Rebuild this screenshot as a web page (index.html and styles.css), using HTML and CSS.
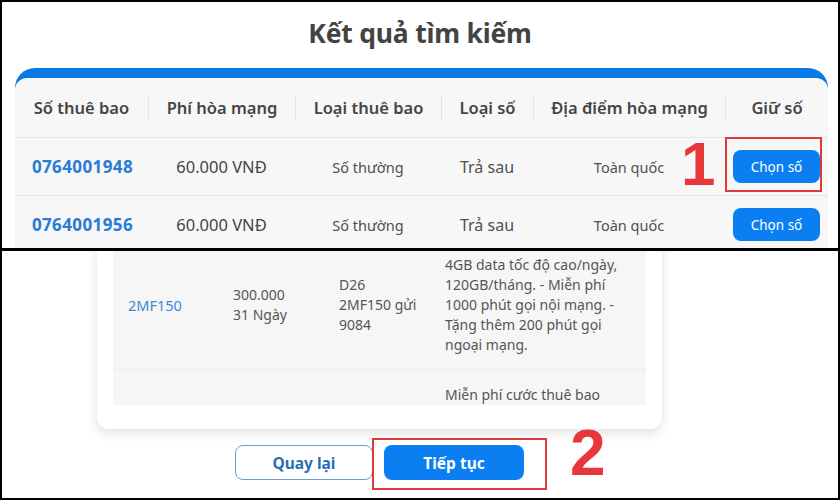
FILE: index.html
```html
<!DOCTYPE html>
<html lang="vi">
<head>
<meta charset="utf-8">
<title>Kết quả tìm kiếm</title>
<link rel="stylesheet" href="styles.css">
</head>
<body>
<div class="shot">
  <section class="panel panel-top">
    <h1 class="title">Kết quả tìm kiếm</h1>
    <div class="result-card">
      <div class="result-table">
        <div class="row head">
          <div class="cell"><span>Số thuê bao</span></div>
          <div class="cell sep"><span>Phí hòa mạng</span></div>
          <div class="cell sep"><span>Loại thuê bao</span></div>
          <div class="cell sep"><span>Loại số</span></div>
          <div class="cell sep"><span>Địa điểm hòa mạng</span></div>
          <div class="cell sep"><span>Giữ số</span></div>
        </div>
        <div class="row body-row">
          <div class="cell phone">0764001948</div>
          <div class="cell fee">60.000 VNĐ</div>
          <div class="cell small">Số thường</div>
          <div class="cell mid">Trả sau</div>
          <div class="cell small">Toàn quốc</div>
          <div class="cell"><button class="pick">Chọn số</button></div>
        </div>
        <div class="row body-row">
          <div class="cell phone">0764001956</div>
          <div class="cell fee">60.000 VNĐ</div>
          <div class="cell small">Số thường</div>
          <div class="cell mid">Trả sau</div>
          <div class="cell small">Toàn quốc</div>
          <div class="cell"><button class="pick">Chọn số</button></div>
        </div>
      </div>
    </div>
    <div class="mark mark-box-1"></div>
    <div class="mark mark-num mark-num-1">1</div>
  </section>

  <section class="panel panel-bottom">
    <div class="pack-card">
      <div class="pack-table">
        <div class="pack-row first">
          <div class="pcell code">2MF150</div>
          <div class="pcell">300.000<br>31 Ngày</div>
          <div class="pcell">D26<br>2MF150 gửi<br>9084</div>
          <div class="pcell desc">4GB data tốc độ cao/ngày,<br>120GB/tháng. - Miễn phí<br>1000 phút gọi nội mạng. -<br>Tặng thêm 200 phút gọi<br>ngoại mạng.</div>
        </div>
        <div class="pack-row second">
          <div class="pcell"></div>
          <div class="pcell"></div>
          <div class="pcell"></div>
          <div class="pcell desc">Miễn phí cước thuê bao</div>
        </div>
      </div>
    </div>
    <div class="actions">
      <button class="btn back">Quay lại</button>
      <button class="btn next">Tiếp tục</button>
    </div>
    <div class="mark mark-box-2"></div>
    <div class="mark mark-num mark-num-2">2</div>
  </section>
</div>
</body>
</html>
```

FILE: styles.css
```css
* { box-sizing: border-box; }
html, body { margin: 0; padding: 0; background: #fff; }
body { font-family: "Noto Sans", "Open Sans", sans-serif; color: #444; }

.shot { width: 840px; height: 500px; display: flex; flex-direction: column; }

.panel {
  position: relative;
  overflow: hidden;
  background: #fff;
  border-left: 2px solid #000;
  border-right: 2px solid #000;
}
.panel-top { height: 251px; border-top: 2px solid #000; border-bottom: 3px solid #000; }
.panel-bottom { height: 249px; border-bottom: 2px solid #000; background: #fff; }

.title {
  margin: 0;
  padding-top: 13px;
  height: 66px;
  text-align: center;
  font-size: 26.5px;
  font-weight: 700;
  line-height: 36px;
  color: #434343;
  letter-spacing: -0.2px;
}

.result-card {
  margin-left: 13px;
  width: 813px;
  background: #0b79e3;
  border-radius: 20px 20px 0 0;
  padding-top: 10px;
}
.result-table {
  background: #f7f7f7;
  border-radius: 12px 12px 0 0;
}
.row {
  display: grid;
  grid-template-columns: 133px 147px 146px 92px 192px 103px;
  align-items: center;
}
.row.head { height: 59px; }
.head .cell {
  height: 26px;
  display: flex;
  align-items: center;
  justify-content: center;
  font-size: 16.5px;
  font-weight: 600;
  color: #454545;
}
.head .cell.sep { border-left: 1px solid #e4e4e4; }

.body-row { height: 58px; border-top: 1px solid #e6e6e6; }
.body-row .cell { text-align: center; }
.phone { font-size: 17px; font-weight: 700; color: #2a7bd4; letter-spacing: 0.4px; padding-left: 2px; }
.fee { font-size: 16.5px; color: #444; }
.small { font-size: 14.5px; color: #505050; }
.mid { font-size: 16px; color: #505050; }

.pick {
  width: 87px;
  height: 33px;
  margin-left: 0;
  border: 0;
  border-radius: 8px;
  background: #0b7ff1;
  color: #fff;
  font-family: inherit;
  font-size: 13.5px;
}

.mark { position: absolute; }
.mark-box-1 { left: 723px; top: 135px; width: 97px; height: 55px; border: 2px solid #dd3b3b; }
.mark-num {
  font-family: "Liberation Sans", Arial, sans-serif;
  font-weight: 700;
  color: #e8373a;
  line-height: 1;
}
.mark-num-1 { left: 679px; top: 131px; font-size: 62px; }

/* bottom panel */
.pack-card {
  margin-left: 95px;
  margin-top: -8px;
  width: 565px;
  background: #fff;
  padding: 0 16px 24px;
  border-radius: 0 0 12px 12px;
  box-shadow: 0 4px 12px rgba(0,0,0,0.12);
}
.pack-table { background: #f6f6f6; }
.pack-row {
  display: grid;
  grid-template-columns: 105px 106px 106px 216px;
  align-items: center;
  font-size: 14px;
  line-height: 20px;
  color: #555;
}
.pack-row.first { padding: 12px 0 14px; }
.pack-row.second { height: 36px; border-top: 1px solid #ececec; align-items: start; padding-top: 15px; overflow: hidden; }
.pcell { padding-left: 15px; }
.pcell.code { color: #3b8bd6; font-size: 14.5px; }
.pcell.desc { padding-right: 8px; }

.actions {
  display: flex;
  justify-content: center;
  gap: 11px;
  margin-left: 95px;
  width: 565px;
  margin-top: 16px;
}
.btn {
  height: 35px;
  border-radius: 8px;
  font-family: inherit;
  font-size: 15.5px;
  font-weight: 700;
}
.btn.back { width: 138px; background: #fff; border: 1px solid #6f9bc9; color: #2a6cb8; }
.btn.next { width: 140px; background: #0b7ff1; border: 0; color: #fff; }

.mark-box-2 { left: 370px; top: 187px; width: 175px; height: 52px; border: 2px solid #dd3b3b; }
.mark-num-2 { left: 568px; top: 170px; font-size: 64px; }
```
